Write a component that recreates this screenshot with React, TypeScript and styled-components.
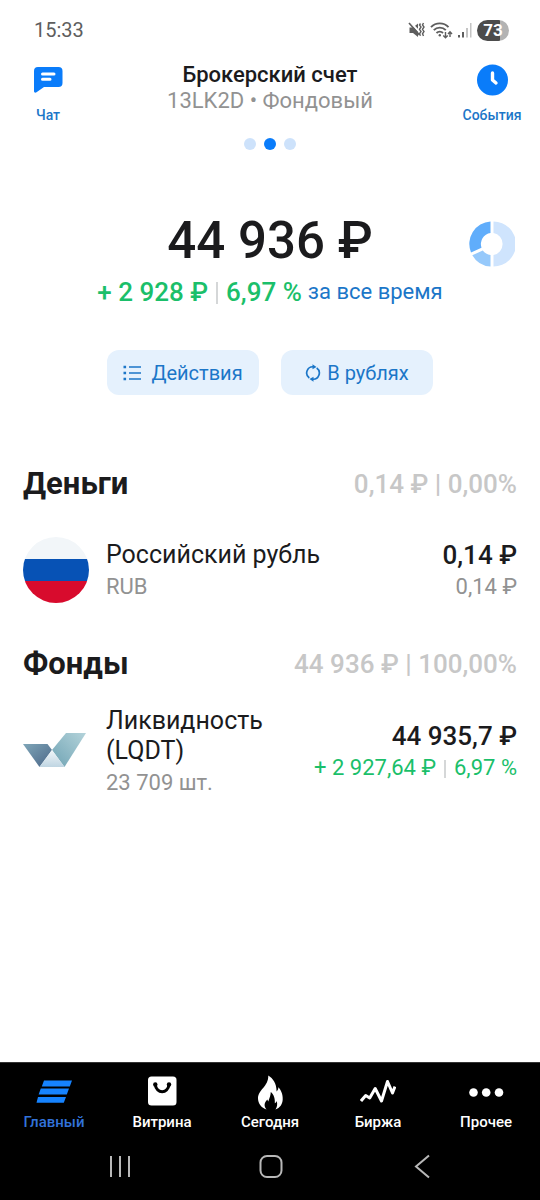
import React from "react";
import styled, { createGlobalStyle } from "styled-components";

const GlobalStyle = createGlobalStyle`
  *, *::before, *::after { box-sizing: border-box; }
  body { margin: 0; background: #fff; font-family: Roboto, "Noto Sans", sans-serif; color: #1b1b1d; }
  button { font: inherit; color: inherit; border: 0; padding: 0; background: none; cursor: pointer; }
  h1, h2, h3, p { margin: 0; font-weight: 400; }
  svg { display: block; flex: none; }
`;

const blue = "#0a7cfa";
const linkBlue = "#1b76c8";
const green = "#1bbf6a";

const Screen = styled.div`
  min-height: 100vh;
  display: flex;
  flex-direction: column;
`;

const StatusBar = styled.div`
  display: flex;
  align-items: center;
  justify-content: space-between;
  height: 60px;
  padding: 0 31px 0 34px;
`;

const Clock = styled.time`
  font-size: 20px;
  line-height: 24px;
  color: #5e5e5e;
`;

const StatusIcons = styled.div`
  display: flex;
  align-items: center;
  gap: 5px;
`;

const Battery = styled.span`
  width: 32px;
  height: 21px;
  border-radius: 11px;
  background: linear-gradient(90deg, #4c4c4c 73%, #b3b3b3 73%);
  color: #fff;
  font-size: 17px;
  font-weight: 700;
  line-height: 21px;
  text-align: center;
`;

const Header = styled.header`
  display: grid;
  grid-template-columns: 96px 1fr 96px;
  align-items: start;
`;

const HeaderButton = styled.button`
  display: flex;
  flex-direction: column;
  align-items: center;
  gap: 10px;
  padding-top: 4px;
  font-size: 14px;
  line-height: 18px;
  font-weight: 500;
  color: ${linkBlue};
`;

const Account = styled.div`
  text-align: center;
`;

const AccountName = styled.h1`
  margin-top: 2px;
  font-size: 22px;
  line-height: 26px;
  font-weight: 500;
`;

const AccountCode = styled.p`
  font-size: 22px;
  line-height: 26px;
  color: #929292;
`;

const Dots = styled.div`
  display: flex;
  justify-content: center;
  gap: 8px;
  margin-top: 24px;
`;

const Dot = styled.span<{ $active?: boolean }>`
  width: 12px;
  height: 12px;
  border-radius: 50%;
  background: ${(p) => (p.$active ? blue : "#cde2fb")};
`;

const Summary = styled.section`
  display: grid;
  grid-template-columns: 96px 1fr 96px;
  align-items: end;
  justify-items: center;
  margin-top: 61px;
`;

const Total = styled.p`
  grid-column: 2;
  font-size: 51px;
  line-height: 60px;
  font-weight: 500;
  white-space: nowrap;
`;

const StructureButton = styled.button`
  padding-bottom: 4px;
`;

const Change = styled.p`
  display: flex;
  justify-content: center;
  align-items: center;
  gap: 6px;
  margin-top: 5px;
  font-size: 22px;
  line-height: 32px;
  color: ${linkBlue};
`;

const Gain = styled.strong`
  font-size: 26px;
  font-weight: 500;
  color: ${green};
`;

const Bar = styled.span<{ $tall?: boolean }>`
  display: inline-block;
  width: 2px;
  height: ${(p) => (p.$tall ? 22 : 18)}px;
  margin: 0 8px;
  vertical-align: -3px;
  background: #d5d7d8;
`;

const Actions = styled.div`
  display: flex;
  justify-content: center;
  gap: 22px;
  margin-top: 42px;
`;

const ActionButton = styled.button<{ $gap: number }>`
  display: flex;
  align-items: center;
  justify-content: center;
  gap: ${(p) => p.$gap}px;
  width: 152px;
  height: 45px;
  border-radius: 12px;
  background: #e5f1fd;
  font-size: 20px;
  line-height: 24px;
  color: ${linkBlue};
`;

const Group = styled.section<{ $first?: boolean }>`
  margin-top: ${(p) => (p.$first ? 71 : 42)}px;
  padding: 0 23px;
`;

const GroupHead = styled.div`
  display: flex;
  justify-content: space-between;
  align-items: center;
`;

const GroupTitle = styled.h2`
  font-size: 31px;
  line-height: 36px;
  font-weight: 700;
`;

const GroupTotal = styled.p`
  font-size: 26px;
  line-height: 36px;
  font-weight: 500;
  color: #c7c7c7;
`;

const Asset = styled.article<{ $top: number }>`
  display: grid;
  grid-template-columns: 66px 1fr auto;
  column-gap: 17px;
  align-items: center;
  margin-top: ${(p) => p.$top}px;
`;

const AssetLabel = styled.div`
  padding-top: 4px;
`;

const AssetName = styled.h3`
  max-width: 240px;
  font-size: 25px;
  line-height: 30px;
`;

const AssetNote = styled.p`
  font-size: 22px;
  line-height: 34px;
  color: #929292;
`;

const AssetValue = styled.div`
  padding-top: 4px;
  text-align: right;
`;

const Price = styled.p`
  font-size: 26px;
  line-height: 30px;
  font-weight: 500;
`;

const AssetGain = styled(AssetNote)`
  color: ${green};
`;

const Bottom = styled.footer`
  margin-top: auto;
  background: #000;
  border-top: 1px solid #333;
`;

const Tabs = styled.nav`
  display: grid;
  grid-template-columns: repeat(5, 1fr);
  padding-top: 11px;
`;

const Tab = styled.a<{ $active?: boolean }>`
  display: flex;
  flex-direction: column;
  align-items: center;
  gap: 3px;
  font-size: 15px;
  line-height: 18px;
  font-weight: 500;
  text-decoration: none;
  color: ${(p) => (p.$active ? "#3273da" : "#fff")};
`;

const SystemNav = styled.nav`
  display: flex;
  justify-content: center;
  gap: 125px;
  padding: 23px 0 20px;
`;

const SystemButton = styled.button`
  display: flex;
`;

const ChatIcon = () => (
  <svg width="32" height="32" viewBox="0 0 32 32">
    <path d="M6 3h20.500a4 4 0 0 1 4 4v12a4 4 0 0 1-4 4H12l-7.500 5.300c-1.200.900-2.500.3-2.500-1V7a4 4 0 0 1 4-4z" fill={blue} />
    <path d="M10.500 10h11.500M10.500 15.300h7.500" stroke="#fff" strokeWidth="3" strokeLinecap="round" />
  </svg>
);

const EventsIcon = () => (
  <svg width="32" height="32" viewBox="0 0 32 32">
    <circle cx="16.500" cy="16" r="15.500" fill={blue} />
    <path d="M16.500 9v7l3.500 3" fill="none" stroke="#fff" strokeWidth="3.400" strokeLinecap="round" strokeLinejoin="round" />
  </svg>
);

const MuteIcon = () => (
  <svg width="17" height="18" viewBox="0 0 17 18" fill="none">
    <path d="M1.500 6.500h3.500L10 2.500v13.500L5 12H1.500z" fill="#5e5e5e" />
    <path d="M2.500 1.500l9.500 10" stroke="#fff" strokeWidth="2" />
    <path d="M1 2l10.500 12" stroke="#5e5e5e" strokeWidth="1.600" />
    <path d="M12.500 2.500l-1 1.500 1.500 2-1.500 2.300 1.500 2.200-1.500 2.300 1 2M15.500 2l-1 2 1.500 2-1.500 2.300 1.500 2.200-1.500 2.300 1 2.200" stroke="#5e5e5e" strokeWidth="1.400" />
  </svg>
);

const WifiIcon = () => (
  <svg width="23" height="18" viewBox="0 0 23 18" fill="none" stroke="#5e5e5e">
    <path d="M1 6.200a12 12 0 0 1 17.500 0M3.800 9.200a8.200 8.200 0 0 1 12 0M6.500 12a4.500 4.500 0 0 1 6.500 0" strokeWidth="1.900" />
    <circle cx="9.800" cy="14.200" r="1.200" fill="#5e5e5e" stroke="none" />
    <path d="M15.500 11v5.500M13.300 14.500l2.200 2.300 2.200-2.300M20 16v-5M18 13l2-2.200 2 2.200" strokeWidth="1.400" />
  </svg>
);

const SignalIcon = () => (
  <svg width="14" height="16" viewBox="0 0 14 16">
    <path d="M0 13h2v2.500H0zM4 10h2v5.500H4z" fill="#5e5e5e" />
    <path d="M8 6h2v9.500H8zM12 1h1.500v14.500H12z" fill="#c4c4c4" />
  </svg>
);

const DonutIcon = () => (
  <svg width="46" height="46" viewBox="0 0 46 46">
    <path d="M24.500.5a22.500 22.500 0 0 1 0 45V34a11.200 11.200 0 0 0 0-22z" fill="#cfe4fd" />
    <path d="M21.500.5V12A11.200 11.200 0 0 0 12.500 26.800L2 31.500A22.500 22.500 0 0 1 21.500.5z" fill="#60adfb" />
    <path d="M3.300 34.200L13.800 29.500A11.200 11.200 0 0 0 21.500 34v11.500A22.500 22.500 0 0 1 3.300 34.200z" fill="#96c9fb" />
  </svg>
);

const ListIcon = () => (
  <svg width="18" height="16" viewBox="0 0 18 16">
    <path d="M6 2h12M6 8h12M6 14h12" stroke={linkBlue} strokeWidth="1.700" />
    <path d="M.5.700h2.600v2.600H.5zM.5 6.700h2.600v2.600H.5zM.5 12.700h2.600v2.600H.5z" fill={linkBlue} />
  </svg>
);

const SwapIcon = () => (
  <svg width="16" height="18" viewBox="0 0 16 18" fill="none" stroke={linkBlue} strokeWidth="1.700">
    <path d="M4.300 14A6.200 6.200 0 0 1 8.500 2.800M11.700 4A6.200 6.200 0 0 1 7.500 15.200" />
    <path d="M7.500.300v5L11.500 3zM8.500 17.700v-5L4.500 15z" fill={linkBlue} stroke="none" />
  </svg>
);

const FlagIcon = () => (
  <svg width="66" height="66" viewBox="0 0 66 66" role="img" aria-label="Россия">
    <clipPath id="flag"><circle cx="33" cy="33" r="33" /></clipPath>
    <g clipPath="url(#flag)">
      <path d="M0 0h66v22H0z" fill="#f2f6f9" />
      <path d="M0 22h66v22H0z" fill="#0752b5" />
      <path d="M0 44h66v22H0z" fill="#d80b2d" />
    </g>
  </svg>
);

const FundIcon = () => (
  <svg width="66" height="66" viewBox="0 0 66 66">
    <defs>
      <linearGradient id="left" x1="0" y1="0" x2="1" y2="1">
        <stop offset="0" stopColor="#7fa6b8" /><stop offset="1" stopColor="#4a6688" />
      </linearGradient>
      <linearGradient id="right" x1="1" y1="0" x2="0" y2="1">
        <stop offset="0" stopColor="#b4d3da" /><stop offset="1" stopColor="#6fa3b4" />
      </linearGradient>
      <linearGradient id="mid" x1="0" y1="0" x2="0" y2="1">
        <stop offset="0" stopColor="#f1f6f9" /><stop offset="1" stopColor="#bfd5e2" />
      </linearGradient>
    </defs>
    <path d="M0 26h24.500l4.500 6L16.500 49z" fill="url(#left)" />
    <path d="M29 32L43 15h20L41.500 49z" fill="url(#right)" />
    <path d="M29 32l12.500 17h-25z" fill="url(#mid)" />
  </svg>
);

const HomeTabIcon = () => (
  <svg width="36" height="36" viewBox="0 0 36 36" fill="#1683ff">
    <path d="M8 6.500h28l-2.200 6H5.800zM4.800 14.500h28.200l-2.200 6H2.600zM2 23h28l-2.200 5.800H.500z" />
  </svg>
);

const ShopTabIcon = () => (
  <svg width="36" height="36" viewBox="0 0 36 36">
    <rect x="4" y="2.500" width="28.500" height="29" rx="3.500" fill="#fff" />
    <path d="M11.300 10.500c1 9.500 12.700 9.500 13.700 0" fill="none" stroke="#000" strokeWidth="3" />
    <circle cx="11.300" cy="10.500" r="2.200" /><circle cx="25" cy="10.500" r="2.200" />
  </svg>
);

const FireTabIcon = () => (
  <svg width="36" height="36" viewBox="0 0 36 36" fill="#fff">
    <path d="M16.300 1.500C21 4.500 24.500 9 24.600 17.500C25.900 16.500 26.400 15 26.300 13.300C29 16 31 20.500 30.700 25.500C30.500 30 28 34 23.500 35.500C25.200 33 25.600 30 24.700 27C24.200 28.500 23.500 29 22.800 29.300C23.200 25 22 20.500 18.800 18C18.700 21 17.700 23.500 16.300 27.500C15.800 27 15.500 26.300 15.400 25.500C12 28.500 11.800 32.500 14.500 35.500C9.500 34 6 29.500 6 24.500C6 15.500 16.500 13 16.300 1.500z" />
  </svg>
);

const ChartTabIcon = () => (
  <svg width="36" height="36" viewBox="0 0 36 36" fill="none" stroke="#fff" strokeWidth="3">
    <path d="M1 27l4.700-5.500 4 2.500 5.500-9.500L21.500 27l6-19.500 5 11.500L35 12.500" strokeLinejoin="round" />
  </svg>
);

const MoreTabIcon = () => (
  <svg width="36" height="36" viewBox="0 0 36 36" fill="#fff">
    <circle cx="5.500" cy="18.500" r="4.300" /><circle cx="18.200" cy="18.500" r="4.300" /><circle cx="31" cy="18.500" r="4.300" />
  </svg>
);

const tabs = [
  { label: "Главный", Icon: HomeTabIcon },
  { label: "Витрина", Icon: ShopTabIcon },
  { label: "Сегодня", Icon: FireTabIcon },
  { label: "Биржа", Icon: ChartTabIcon },
  { label: "Прочее", Icon: MoreTabIcon },
];

export default function App() {
  return (
    <Screen>
      <GlobalStyle />
      <StatusBar>
        <Clock>15:33</Clock>
        <StatusIcons>
          <MuteIcon />
          <WifiIcon />
          <SignalIcon />
          <Battery>73</Battery>
        </StatusIcons>
      </StatusBar>
      <Header>
        <HeaderButton><ChatIcon />Чат</HeaderButton>
        <Account>
          <AccountName>Брокерский счет</AccountName>
          <AccountCode>13LK2D • Фондовый</AccountCode>
          <Dots><Dot /><Dot $active /><Dot /></Dots>
        </Account>
        <HeaderButton><EventsIcon />События</HeaderButton>
      </Header>
      <main>
        <Summary>
          <Total>44 936 ₽</Total>
          <StructureButton aria-label="Структура портфеля"><DonutIcon /></StructureButton>
        </Summary>
        <Change>
          <Gain>+ 2 928 ₽<Bar $tall />6,97 %</Gain>
          <span>за все время</span>
        </Change>
        <Actions>
          <ActionButton $gap={10}><ListIcon />Действия</ActionButton>
          <ActionButton $gap={6}><SwapIcon />В рублях</ActionButton>
        </Actions>
        <Group $first>
          <GroupHead>
            <GroupTitle>Деньги</GroupTitle>
            <GroupTotal>0,14 ₽ | 0,00%</GroupTotal>
          </GroupHead>
          <Asset $top={34}>
            <FlagIcon />
            <AssetLabel>
              <AssetName>Российский рубль</AssetName>
              <AssetNote>RUB</AssetNote>
            </AssetLabel>
            <AssetValue>
              <Price>0,14 ₽</Price>
              <AssetNote>0,14 ₽</AssetNote>
            </AssetValue>
          </Asset>
        </Group>
        <Group>
          <GroupHead>
            <GroupTitle>Фонды</GroupTitle>
            <GroupTotal>44 936 ₽ | 100,00%</GroupTotal>
          </GroupHead>
          <Asset $top={20}>
            <FundIcon />
            <AssetLabel>
              <AssetName>Ликвидность (LQDT)</AssetName>
              <AssetNote>23 709 шт.</AssetNote>
            </AssetLabel>
            <AssetValue>
              <Price>44 935,7 ₽</Price>
              <AssetGain>+ 2 927,64 ₽<Bar />6,97 %</AssetGain>
            </AssetValue>
          </Asset>
        </Group>
      </main>
      <Bottom>
        <Tabs>
          {tabs.map(({ label, Icon }, i) => (
            <Tab key={label} href="#" $active={i === 0}><Icon />{label}</Tab>
          ))}
        </Tabs>
        <SystemNav>
          <SystemButton aria-label="Недавние">
            <svg width="26" height="26" viewBox="0 0 26 26" stroke="#b8b8b8" strokeWidth="2"><path d="M5 2v21M14 2v21M23 2v21" /></svg>
          </SystemButton>
          <SystemButton aria-label="Домой">
            <svg width="26" height="26" viewBox="0 0 26 26" fill="none" stroke="#b8b8b8" strokeWidth="2"><rect x="3.500" y="2" width="21" height="21" rx="6.500" /></svg>
          </SystemButton>
          <SystemButton aria-label="Назад">
            <svg width="26" height="26" viewBox="0 0 26 26" fill="none" stroke="#b8b8b8" strokeWidth="2"><path d="M21 1.500L8 12.500l13 11" /></svg>
          </SystemButton>
        </SystemNav>
      </Bottom>
    </Screen>
  );
}
